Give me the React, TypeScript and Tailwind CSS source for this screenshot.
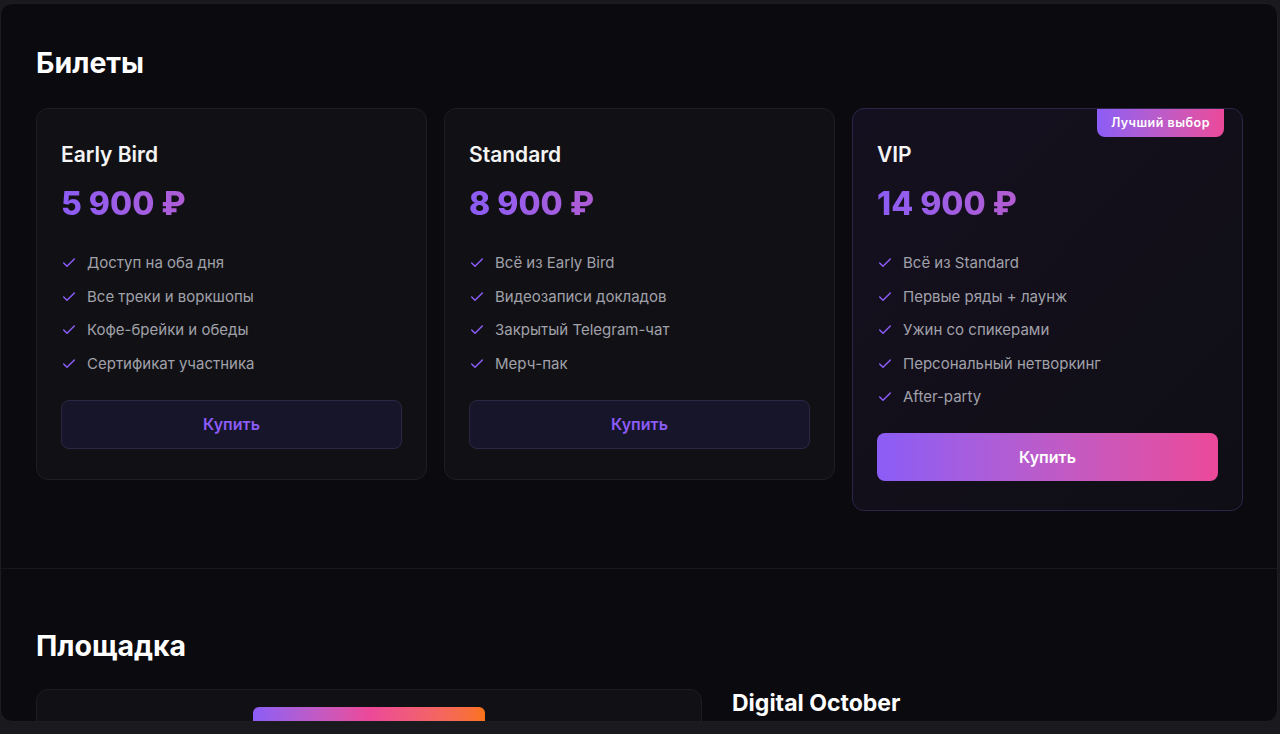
import React from 'react';
import { Check } from 'lucide-react';

type Ticket = {
  name: string;
  price: string;
  features: string[];
  featured?: boolean;
};

const tickets: Ticket[] = [
  {
    name: 'Early Bird',
    price: '5 900 ₽',
    features: ['Доступ на оба дня', 'Все треки и воркшопы', 'Кофе-брейки и обеды', 'Сертификат участника'],
  },
  {
    name: 'Standard',
    price: '8 900 ₽',
    features: ['Всё из Early Bird', 'Видеозаписи докладов', 'Закрытый Telegram-чат', 'Мерч-пак'],
  },
  {
    name: 'VIP',
    price: '14 900 ₽',
    features: ['Всё из Standard', 'Первые ряды + лаунж', 'Ужин со спикерами', 'Персональный нетворкинг', 'After-party'],
    featured: true,
  },
];

const TicketCard: React.FC<{ ticket: Ticket }> = ({ ticket }) => {
  return (
    <div
      className={`relative rounded-xl border px-6 pt-[32px] ${
        ticket.featured
          ? 'pb-[29px] border-[#2c2549] bg-gradient-to-br from-[#15101f] to-[#0f0e15]'
          : 'pb-[30px] border-[#1d1d23] bg-[#111115]'
      }`}
    >
      {ticket.featured && (
        <div className="absolute top-0 right-[18px] h-7 px-[14px] flex items-center rounded-b-lg bg-gradient-to-r from-[#8b5cf6] to-[#ec4899] text-[12.5px] font-semibold tracking-[0.5px] text-white">
          Лучший выбор
        </div>
      )}
      <h3 className="text-[21px] leading-7 font-semibold text-[#f4f4f5]">{ticket.name}</h3>
      <div className="mt-[17px] text-[32px] leading-9 font-extrabold bg-gradient-to-r from-[#8b5cf6] to-[#ec4899] bg-clip-text text-transparent">
        {ticket.price}
      </div>
      <ul className="mt-[29px] space-y-[9.5px]">
        {ticket.features.map((f) => (
          <li key={f} className="flex items-center gap-2.5 text-[15px] leading-6 text-[#a1a1aa]">
            <Check className="w-4 h-4 text-[#8b5cf6]" strokeWidth={2.25} />
            {f}
          </li>
        ))}
      </ul>
      {ticket.featured ? (
        <button className="mt-6 w-full h-12 rounded-lg bg-gradient-to-r from-[#8b5cf6] to-[#ec4899] text-base font-semibold text-white">
          Купить
        </button>
      ) : (
        <button className="mt-6 w-full h-[49px] rounded-lg border border-[#2b2843] bg-[#17152a] text-base font-semibold text-[#8b5cf6]">
          Купить
        </button>
      )}
    </div>
  );
};

export default function App() {
  return (
    <div className="w-[1280px] h-[734px] overflow-hidden bg-[#1a1a1e]" style={{ fontFamily: 'Inter, "Noto Sans", sans-serif' }}>
      <div className="mt-[3px] w-[1278px] h-[719px] overflow-hidden rounded-xl border border-[#1c1c22] bg-[#0b0b0f]">
        {/* Tickets */}
        <section className="pl-[35px] pr-[34px] pt-[41px] pb-[57px]">
          <h2 className="text-[28.5px] leading-9 font-bold text-white">Билеты</h2>
          <div className="mt-[27px] grid grid-cols-3 gap-[17px] items-start">
            {tickets.map((t) => (
              <TicketCard key={t.name} ticket={t} />
            ))}
          </div>
        </section>

        {/* Venue */}
        <section className="border-t border-[#17171c] pl-[35px] pr-[34px] pt-[59px]">
          <h2 className="text-[28.5px] leading-9 font-bold text-white">Площадка</h2>
          <div className="mt-[25px] flex gap-[30px]">
            <div className="w-[666px] h-[300px] rounded-xl border border-[#1d1d23] bg-[#111115] flex justify-center pt-[17px]">
              <div className="w-[232px] h-10 rounded-t-md bg-gradient-to-r from-[#8b5cf6] via-[#ec4899] to-[#f97316]" />
            </div>
            <div className="flex-1">
              <h3 className="text-[23px] leading-7 font-bold text-white">Digital October</h3>
            </div>
          </div>
        </section>
      </div>
    </div>
  );
}
